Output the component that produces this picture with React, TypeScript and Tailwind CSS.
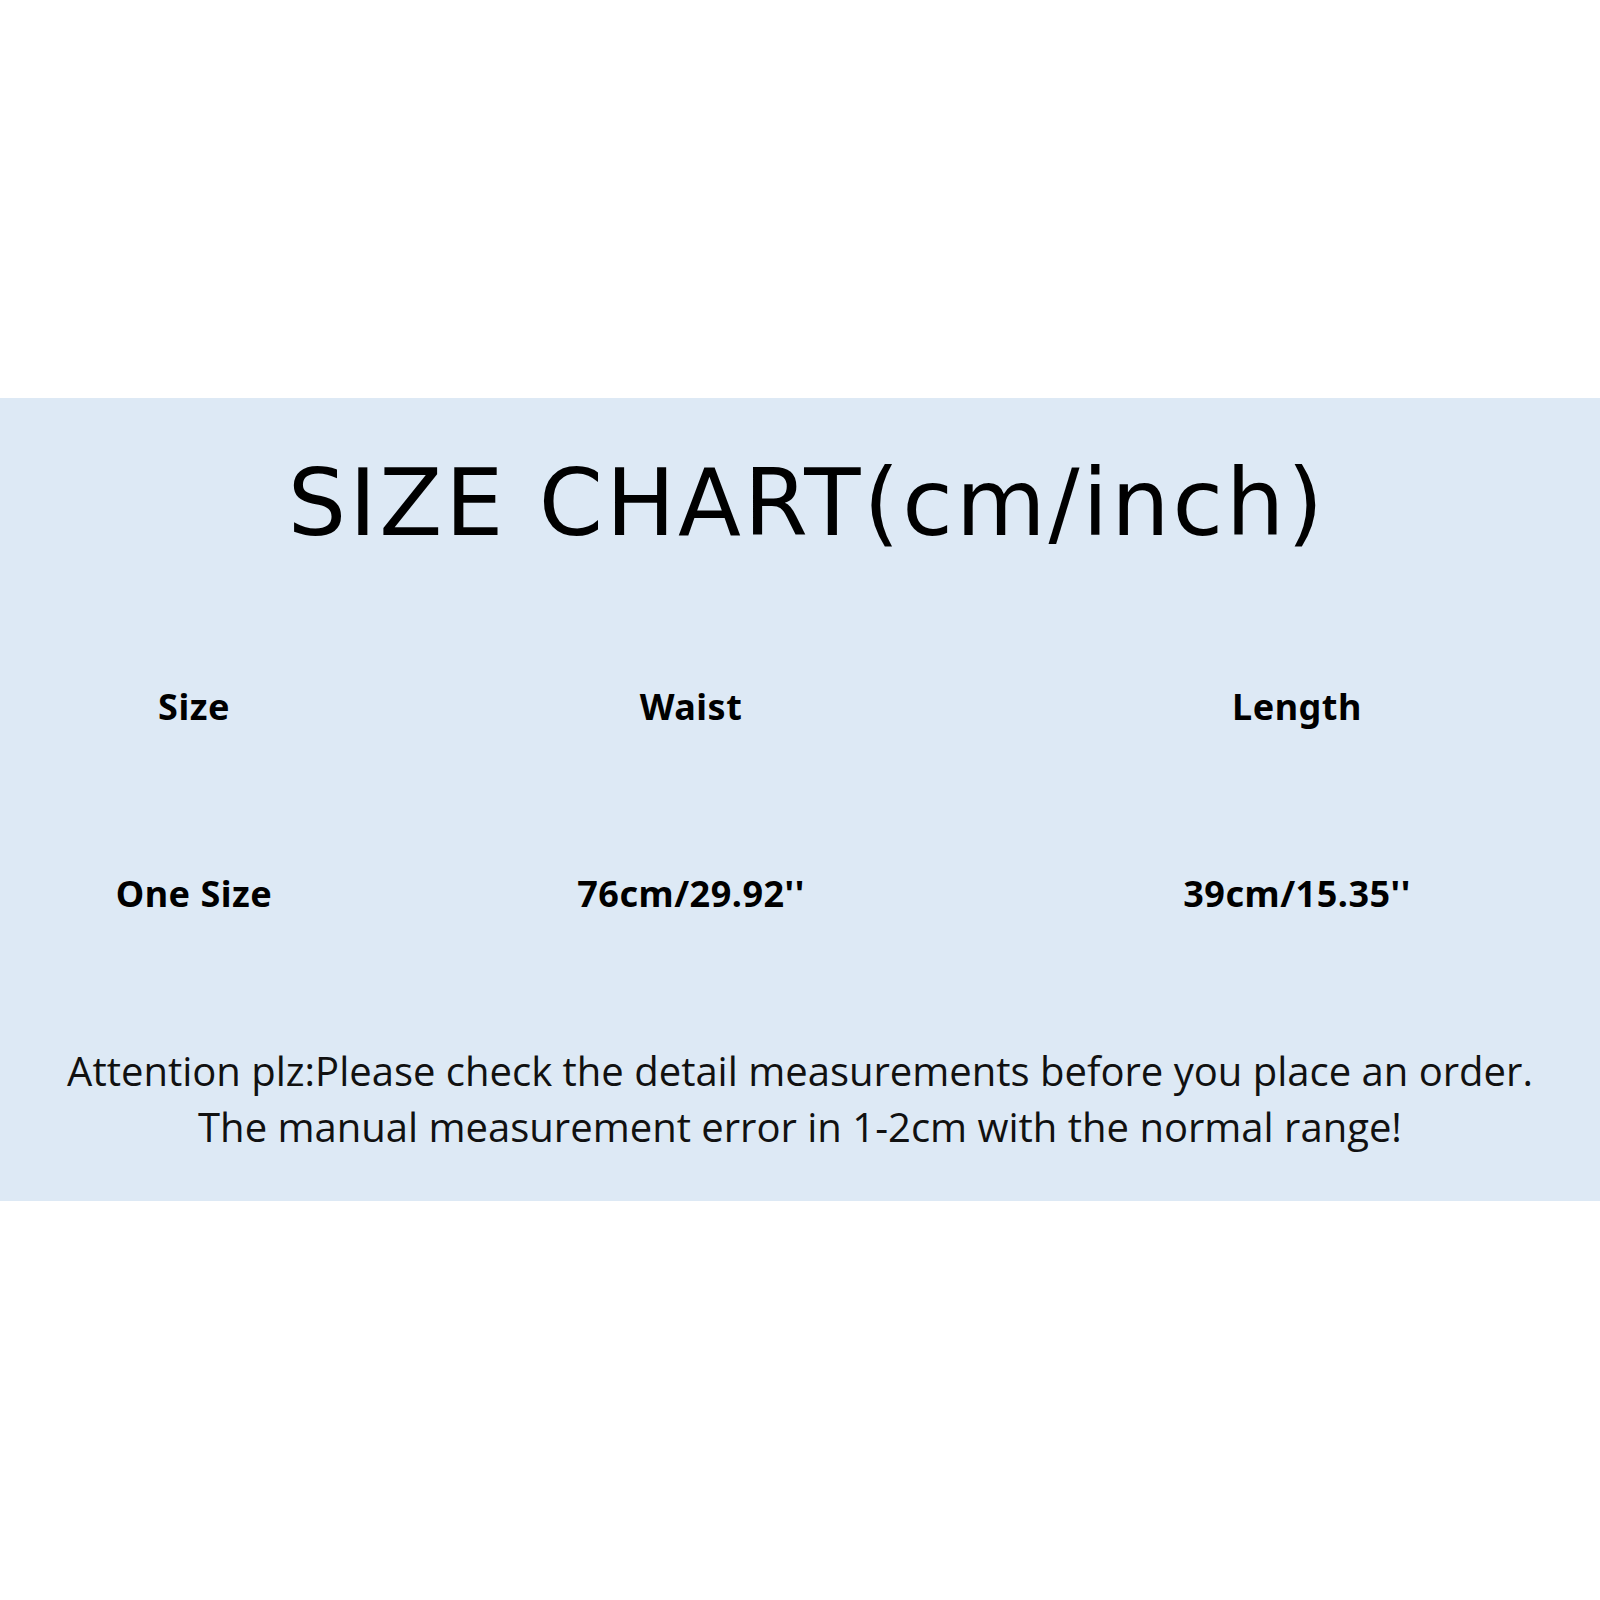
export default function App() {
  const rows = [
    ['Size', 'Waist', 'Length'],
    ['One Size', "76cm/29.92''", "39cm/15.35''"],
  ];

  return (
    <div className="h-[1600px] w-[1600px] bg-white pt-[398px]">
      {/* Size chart band */}
      <section className="flex h-[803px] flex-col bg-[#dde9f5] text-black">
        <h1 className="pl-[14px] pt-[46px] text-center font-['Comic_Sans_MS','DejaVu_Sans',sans-serif] text-[92px] font-normal leading-[120px] tracking-[3px]">
          SIZE CHART(cm/inch)
        </h1>

        <div className="mt-[119px] font-['Noto_Sans',sans-serif] text-[36px] font-bold tracking-[0.5px]">
          {rows.map((row, i) => (
            <div
              key={i}
              className={`grid grid-cols-[388px_606px_606px] ${i === 0 ? 'h-[48px]' : 'mt-[139px] h-[48px]'}`}
            >
              {row.map((cell) => (
                <div key={cell} className="text-center leading-[48px]">
                  {cell}
                </div>
              ))}
            </div>
          ))}
        </div>

        <div className="mt-[125px] text-center font-['Open_Sans',sans-serif] text-[40px] leading-[56px] text-[#111]">
          <p>Attention plz:Please check the detail measurements before you place an order.</p>
          <p>The manual measurement error in 1-2cm with the normal range!</p>
        </div>
      </section>
    </div>
  );
}
